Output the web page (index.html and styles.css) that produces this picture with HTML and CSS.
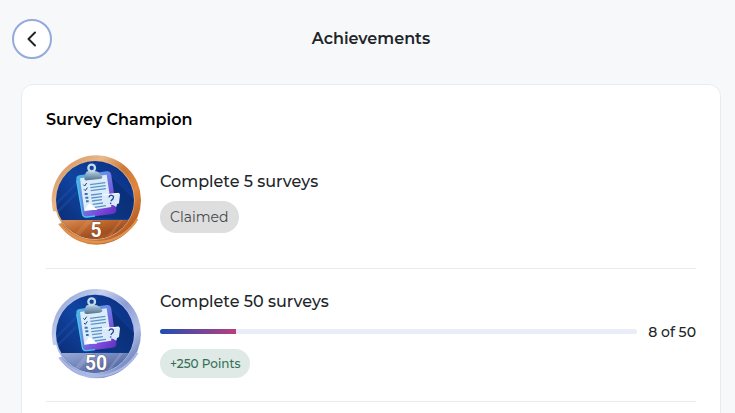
FILE: index.html
```html
<!DOCTYPE html>
<html lang="en">
<head>
<meta charset="utf-8">
<meta name="viewport" content="width=device-width, initial-scale=1">
<title>Achievements</title>
<link rel="stylesheet" href="styles.css">
</head>
<body>
<svg class="defs" aria-hidden="true">
  <defs>
    <linearGradient id="bronze" x1="0" y1="0" x2="1" y2="1">
      <stop offset="0" stop-color="#cf884e"/><stop offset=".3" stop-color="#e9b88c"/><stop offset=".48" stop-color="#cc7935"/><stop offset=".66" stop-color="#df8740"/><stop offset=".85" stop-color="#b75c20"/><stop offset="1" stop-color="#edb47e"/>
    </linearGradient>
    <linearGradient id="silver" x1="0" y1="0" x2="1" y2="1">
      <stop offset="0" stop-color="#7f93cc"/><stop offset=".3" stop-color="#c6d0ee"/><stop offset=".5" stop-color="#8c9dd3"/><stop offset=".7" stop-color="#b1bfe8"/><stop offset=".85" stop-color="#7587bd"/><stop offset="1" stop-color="#c4cff0"/>
    </linearGradient>
    <linearGradient id="bronze-band" x1="0" y1="0" x2="1" y2="1">
      <stop offset="0" stop-color="#dd9560"/><stop offset=".35" stop-color="#bf682d"/><stop offset=".6" stop-color="#a04f20"/><stop offset="1" stop-color="#c86f2d"/>
    </linearGradient>
    <linearGradient id="silver-band" x1="0" y1="0" x2="1" y2="1">
      <stop offset="0" stop-color="#a1afd9"/><stop offset=".4" stop-color="#7588bd"/><stop offset=".65" stop-color="#5b6ea6"/><stop offset="1" stop-color="#8192c5"/>
    </linearGradient>
    <linearGradient id="disc" x1="0" y1="1" x2="1" y2="0">
      <stop offset="0" stop-color="#0b2668"/><stop offset=".5" stop-color="#1145a2"/><stop offset="1" stop-color="#0a2c7c"/>
    </linearGradient>
    <linearGradient id="board" x1="0" y1="0" x2="1" y2="1">
      <stop offset="0" stop-color="#48bce8"/><stop offset=".4" stop-color="#6a8be6"/><stop offset=".75" stop-color="#7a45d8"/><stop offset="1" stop-color="#5a2cba"/>
    </linearGradient>
    <linearGradient id="clip" x1="0" y1="0" x2="0" y2="1">
      <stop offset="0" stop-color="#b9d1e3"/><stop offset="1" stop-color="#4f718f"/>
    </linearGradient>
    <clipPath id="disc-clip"><circle cx="165" cy="165" r="117"/></clipPath>
    <g id="clipboard">
      <path d="M200 82L284 166V222H224L130 213Z" fill="#082563" opacity=".5"/>
      <path d="M50 175L170 55M48 205L110 143" stroke="#2459b5" stroke-width="7" opacity=".35"/>
      <path d="M118 91L200 79Q212 78 214 91L229 192Q230 205 217 207L141 217Q129 218 127 207L109 102Q108 93 118 91Z" fill="url(#board)"/>
      <path d="M110 106L127 206Q129 217 141 216L165 213" fill="none" stroke="#48c5ec" stroke-width="4"/>
      <path d="M120 100L200 89L214 186L163 194L133 199Z" fill="#dcecfa"/>
      <path d="M150 119L196 113M151 128L197 122M152 137L198 131M153 150L186 146M154 159L187 155M156 168L186 164M158 178L189 174M164 187L198 182" stroke="#5c95c9" stroke-width="4"/>
      <path d="M130 119l4 4 6-9M132 133l4 4 6-9" fill="none" stroke="#173f78" stroke-width="3"/>
      <path d="M134 147h9M136 158h9M138 169h8" stroke="#3974ad" stroke-width="6"/>
      <path d="M134 195L148 174L172 195Z" fill="#fff"/>
      <path d="M133 101L137 84Q139 78 148 78H163Q172 78 178 84L187 95Q188 101 178 102L142 106Q133 107 133 101Z" fill="url(#clip)"/>
      <circle cx="155" cy="69" r="10" fill="none" stroke="#c3dceb" stroke-width="7"/>
      <path d="M191 149L235 144Q240 144 240 149L237 175L231 178L229 186L219 180L197 179Q191 178 190 171L186 154Q186 150 191 149Z" fill="#dbeafb"/>
      <path d="M190 150L236 145" stroke="#fff" stroke-width="3"/>
      <path d="M207 157Q208 150 215 151Q222 152 220 159Q219 163 214 166L213 169" fill="none" stroke="#254d91" stroke-width="4"/>
      <circle cx="212" cy="175" r="2.5" fill="#254d91"/>
    </g>
  </defs>
</svg>

<header class="topbar">
  <button class="back" type="button" aria-label="Back">
    <svg viewBox="0 0 24 24" aria-hidden="true"><path d="M15 5.500L8.500 12L15 18.500"/></svg>
  </button>
  <h1 class="topbar-title">Achievements</h1>
</header>

<main class="card">
  <h2 class="card-title">Survey Champion</h2>
  <ul class="list">
    <li class="item">
      <svg class="medal" viewBox="18 21 306 300" role="img" aria-label="Bronze survey medal">
        <circle cx="169" cy="165" r="134" fill="url(#bronze)"/>
        <path d="M34 201L48 198Q52 216 65 234L54 242Q40 226 34 201Z" fill="#fff"/>
        <circle cx="165" cy="165" r="119" fill="#e8b587"/>
        <circle cx="165" cy="165" r="117" fill="url(#disc)"/>
        <g clip-path="url(#disc-clip)">
          <use href="#clipboard"/>
          <path d="M40 225H290V290H40Z" fill="url(#bronze-band)"/>
          <path d="M84 290L142 225H160L102 290ZM190 290L240 225H249L200 290Z" fill="#f0b17c" opacity=".2"/>
        </g>
        <path d="M58 236A141 141 0 0 0 292 222" fill="none" stroke="#df9353" stroke-width="7"/>
        <text class="medal-number" x="168" y="276">5</text>
      </svg>
      <div class="details">
        <h3 class="item-title">Complete 5 surveys</h3>
        <span class="pill pill-claimed">Claimed</span>
      </div>
    </li>
    <li class="item">
      <svg class="medal" viewBox="18 21 306 300" role="img" aria-label="Silver survey medal">
        <circle cx="169" cy="167" r="134" fill="url(#silver)"/>
        <path d="M34 203L48 200Q52 218 65 236L54 244Q40 228 34 203Z" fill="#fff"/>
        <g transform="translate(0 2)">
          <circle cx="165" cy="165" r="119" fill="#b2c0e8"/>
          <circle cx="165" cy="165" r="117" fill="url(#disc)"/>
          <g clip-path="url(#disc-clip)">
            <use href="#clipboard"/>
            <path d="M40 223H290V290H40Z" fill="url(#silver-band)"/>
            <path d="M84 290L142 223H160L102 290ZM190 290L240 223H249L200 290Z" fill="#d0daf7" opacity=".2"/>
          </g>
          <path d="M58 236A141 141 0 0 0 292 222" fill="none" stroke="#a8b7e4" stroke-width="7"/>
        </g>
        <text class="medal-number" x="168" y="276">50</text>
      </svg>
      <div class="details">
        <h3 class="item-title">Complete 50 surveys</h3>
        <div class="progress-row">
          <progress class="progress" id="progress-50" max="50" value="8"></progress>
          <label class="progress-label" for="progress-50">8 of 50</label>
        </div>
        <span class="pill pill-points">+250 Points</span>
      </div>
    </li>
  </ul>
</main>
</body>
</html>
```
FILE: styles.css
```css
* {
  box-sizing: border-box;
}

body {
  margin: 0;
  background: #f6f8fa;
  color: #212529;
  font-family: Montserrat, Inter, "Open Sans", sans-serif;
  font-size: 16px;
  line-height: 24px;
}

h1, h2, h3, ul {
  margin: 0;
  padding: 0;
}

.defs {
  position: absolute;
  width: 0;
  height: 0;
}

.topbar {
  display: grid;
  grid-template-columns: 40px 1fr 40px;
  align-items: center;
  padding: 19px 5px 25px 12px;
}

.back {
  display: grid;
  place-items: center;
  width: 40px;
  height: 40px;
  padding: 0;
  border: 2px solid #94a9dc;
  border-radius: 50%;
  background: #fff;
  cursor: pointer;
}

.back svg {
  width: 24px;
  height: 24px;
  fill: none;
  stroke: #212529;
  stroke-width: 2;
  stroke-linecap: round;
  stroke-linejoin: round;
}

.topbar-title {
  font-size: 16px;
  line-height: 24px;
  font-weight: 600;
  text-align: center;
}

.card {
  margin: 0 14px 0 21px;
  padding: 23px 24px 24px;
  border: 1px solid #e9ecef;
  border-radius: 12px;
  background: #fff;
}

.card-title {
  padding-bottom: 4px;
  color: #000;
  font-size: 16px;
  line-height: 24px;
  font-weight: 600;
}

.list {
  list-style: none;
}

.item {
  display: flex;
  align-items: center;
  gap: 12px;
  padding: 16px 0;
  border-bottom: 1px solid #e9ecef;
}

.medal {
  flex: none;
  width: 102px;
  height: 100px;
}

.medal-number {
  fill: #fff;
  stroke: #48332b;
  stroke-opacity: 0.6;
  stroke-width: 3px;
  paint-order: stroke;
  font-family: Roboto, sans-serif;
  font-size: 58px;
  font-weight: 700;
  text-anchor: middle;
}

.details {
  flex: 1;
  min-width: 0;
}

.item-title {
  padding: 1px 0 7px;
  font-size: 16px;
  line-height: 24px;
  font-weight: 500;
}

.progress-row {
  display: flex;
  align-items: center;
  gap: 11px;
  padding-bottom: 6px;
}

.progress {
  flex: 1;
  min-width: 0;
  height: 5px;
  border: 0;
  border-radius: 4px;
  background: #e8edf7;
  overflow: hidden;
  appearance: none;
}

.progress::-webkit-progress-bar {
  background: #e8edf7;
}

.progress::-webkit-progress-value {
  background: linear-gradient(90deg, #1f4eb4, #b93f7d);
}

.progress-label {
  font-size: 14px;
  line-height: 22px;
  font-weight: 500;
}

.pill {
  display: block;
  width: fit-content;
  padding: 4px 10px;
  border-radius: 16px;
}

.pill-claimed {
  margin-bottom: 2px;
  background: #dedede;
  color: #45484b;
  font-size: 14px;
}

.pill-points {
  margin-bottom: 4px;
  background: #dfe9e5;
  color: #347057;
  font-size: 12px;
  line-height: 21px;
  font-weight: 500;
}
```
